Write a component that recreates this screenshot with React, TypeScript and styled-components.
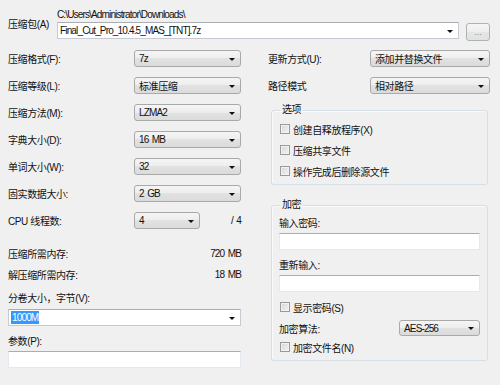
import styled, { createGlobalStyle } from "styled-components";

const GlobalStyle = createGlobalStyle`
  html, body {
    margin: 0;
    padding: 0;
    background: #f0f0f0;
  }
  body {
    font-family: "Liberation Sans", "Noto Sans CJK SC", sans-serif;
    font-size: 10px;
    letter-spacing: -0.4px;
    color: #111;
  }
`;

const Dialog = styled.div`
  box-sizing: border-box;
  width: 500px;
  height: 385px;
  padding: 7px 10px 0 8px;
  background: #f0f0f0;
  overflow: hidden;
`;

const TopRow = styled.div`
  display: grid;
  grid-template-columns: 49px 402px 31px;
  grid-template-rows: 14px 17px;
  row-gap: 1px;
`;

const ArchiveLabel = styled.span`
  grid-column: 1;
  grid-row: 1 / 3;
  align-self: center;
  white-space: nowrap;
`;

// latin strings in the shot are narrower than the CJK labels
const Latin = styled.span`
  letter-spacing: -0.85px;
  word-spacing: 1.5px;
  white-space: nowrap;
`;

const PathText = styled(Latin)`
  grid-column: 2;
  grid-row: 1;
  align-self: center;
`;

const BrowseButton = styled.div`
  grid-column: 3;
  grid-row: 2;
  justify-self: end;
  width: 24px;
  height: 18px;
  box-sizing: border-box;
  margin-top: 1px;
  border: 1px solid #adb2b5;
  border-radius: 3px;
  background: linear-gradient(#f6f6f6, #eeeeee 50%, #e6e6e6 50%, #e2e2e2);
  color: #8a8a8a;
  font-size: 9px;
  letter-spacing: 0;
  display: flex;
  align-items: center;
  justify-content: center;
`;

const Columns = styled.div`
  display: grid;
  grid-template-columns: 233px 222px;
  column-gap: 27px;
  margin-top: 11px;
`;

const Column = styled.div`
  display: flex;
  flex-direction: column;
`;

const Row = styled.div<{ $mt?: number; $mb?: number; $h?: number }>`
  display: flex;
  align-items: center;
  justify-content: space-between;
  height: ${(p) => p.$h ?? 17}px;
  margin-top: ${(p) => p.$mt ?? 0}px;
  margin-bottom: ${(p) => p.$mb ?? 10}px;
  white-space: nowrap;
`;

const RowLabel = styled.span<{ $w?: number }>`
  width: ${(p) => (p.$w ? `${p.$w}px` : "auto")};
  flex-shrink: 0;
`;

const InfoRow = styled.div<{ $mt: number }>`
  display: flex;
  align-items: center;
  justify-content: space-between;
  height: 14px;
  margin-top: ${(p) => p.$mt}px;
  white-space: nowrap;
`;

const FieldLabel = styled.div<{ $mt: number }>`
  height: 14px;
  line-height: 14px;
  margin-top: ${(p) => p.$mt}px;
  white-space: nowrap;
`;

const Combo = styled.div<{ $w?: number; $h?: number; $edit?: boolean; $mt?: number }>`
  display: flex;
  align-items: center;
  justify-content: space-between;
  box-sizing: border-box;
  width: ${(p) => (p.$w ? `${p.$w}px` : "100%")};
  height: ${(p) => p.$h ?? 17}px;
  margin-top: ${(p) => p.$mt ?? 0}px;
  padding: 0 5px 0 ${(p) => (p.$edit ? 2 : 4)}px;
  border: 1px solid ${(p) => (p.$edit ? "#c5cad3" : "#a9a9a9")};
  border-top-color: ${(p) => (p.$edit ? "#abadb3" : "#a9a9a9")};
  border-radius: ${(p) => (p.$edit ? "1px" : "3px")};
  background: ${(p) =>
    p.$edit
      ? "#fff"
      : "linear-gradient(#f5f5f5, #ededed 50%, #e2e2e2 50%, #dbdbdb)"};
  flex-shrink: 0;
  white-space: nowrap;
`;

const PathCombo = styled(Combo)`
  grid-column: 2;
  grid-row: 2;
`;

const ThreadCombo = styled(Combo)`
  margin-right: auto;
`;

const ComboText = styled.span<{ $latin?: boolean }>`
  letter-spacing: ${(p) => (p.$latin ? "-0.85px" : "-0.4px")};
  word-spacing: ${(p) => (p.$latin ? "1.5px" : "0")};
`;

const Arrow = styled.span`
  width: 0;
  height: 0;
  border-left: 3px solid transparent;
  border-right: 3px solid transparent;
  border-top: 3px solid #111;
  margin-top: 1px;
`;

const Selected = styled(Latin)`
  background: #3399ff;
  color: #fff;
  padding: 0 1px;
  line-height: 13px;
`;

const TextBox = styled.div<{ $mt: number }>`
  box-sizing: border-box;
  height: 17px;
  margin-top: ${(p) => p.$mt}px;
  background: #fff;
  border: 1px solid #e3e9ef;
  border-top-color: #abadb3;
`;

const Group = styled.fieldset<{ $mt: number }>`
  margin: ${(p) => p.$mt}px 2px 0 3px;
  padding: 0 7px 6px 7px;
  border: 1px solid #d5dfe5;
  border-radius: 3px;
  box-shadow: inset 1px 1px 0 #fafafa;
  min-width: 0;
  display: flex;
  flex-direction: column;
`;

const GroupTitle = styled.legend`
  padding: 0 2px;
  margin-left: 1px;
  line-height: 14px;
  color: #111;
`;

const CheckRow = styled.label<{ $mt: number }>`
  display: flex;
  align-items: center;
  gap: 3px;
  height: 14px;
  margin-top: ${(p) => p.$mt}px;
  white-space: nowrap;
`;

const CheckBox = styled.span`
  box-sizing: border-box;
  width: 10px;
  height: 10px;
  margin-left: 1px;
  border: 1px solid #9a9a9a;
  background: linear-gradient(135deg, #d6d6d6, #f4f4f4);
  box-shadow: inset 0 0 0 1px #f2f2f2;
`;

const options = ["创建自释放程序(X)", "压缩共享文件", "操作完成后删除源文件"];

const leftRows = [
  { label: "压缩格式(F):", value: "7z", latin: true },
  { label: "压缩等级(L):", value: "标准压缩", latin: false },
  { label: "压缩方法(M):", value: "LZMA2", latin: true },
  { label: "字典大小(D):", value: "16 MB", latin: true },
  { label: "单词大小(W):", value: "32", latin: true },
  { label: "固实数据大小:", value: "2 GB", latin: true },
];

function App() {
  return (
    <>
      <GlobalStyle />
      <Dialog>
        <TopRow>
          <ArchiveLabel>压缩包(A)</ArchiveLabel>
          <PathText>C:\Users\Administrator\Downloads\</PathText>
          <PathCombo $edit>
            <ComboText $latin>Final_Cut_Pro_10.4.5_MAS_[TNT].7z</ComboText>
            <Arrow />
          </PathCombo>
          <BrowseButton>...</BrowseButton>
        </TopRow>

        <Columns>
          <Column>
            {leftRows.map((r) => (
              <Row key={r.label}>
                <RowLabel>{r.label}</RowLabel>
                <Combo $w={107}>
                  <ComboText $latin={r.latin}>{r.value}</ComboText>
                  <Arrow />
                </Combo>
              </Row>
            ))}
            <Row>
              <RowLabel $w={126}>CPU 线程数:</RowLabel>
              <ThreadCombo $w={66}>
                <ComboText $latin>4</ComboText>
                <Arrow />
              </ThreadCombo>
              <Latin>/ 4</Latin>
            </Row>
            <InfoRow $mt={7}>
              <span>压缩所需内存:</span>
              <Latin>720 MB</Latin>
            </InfoRow>
            <InfoRow $mt={7}>
              <span>解压缩所需内存:</span>
              <Latin>18 MB</Latin>
            </InfoRow>
            <FieldLabel $mt={11}>分卷大小，字节(V):</FieldLabel>
            <Combo $edit $mt={3}>
              <Selected>1000M</Selected>
              <Arrow />
            </Combo>
            <FieldLabel $mt={9}>参数(P):</FieldLabel>
            <TextBox $mt={2} />
          </Column>

          <Column>
            <Row>
              <RowLabel>更新方式(U):</RowLabel>
              <Combo $w={120}>
                <ComboText>添加并替换文件</ComboText>
                <Arrow />
              </Combo>
            </Row>
            <Row $mb={0}>
              <RowLabel>路径模式</RowLabel>
              <Combo $w={120}>
                <ComboText>相对路径</ComboText>
                <Arrow />
              </Combo>
            </Row>

            <Group $mt={9}>
              <GroupTitle>选项</GroupTitle>
              {options.map((o, i) => (
                <CheckRow key={o} $mt={i === 0 ? 5 : 7}>
                  <CheckBox />
                  <span>{o}</span>
                </CheckRow>
              ))}
            </Group>

            <Group $mt={13}>
              <GroupTitle>加密</GroupTitle>
              <FieldLabel $mt={5}>输入密码:</FieldLabel>
              <TextBox $mt={2} />
              <FieldLabel $mt={9}>重新输入:</FieldLabel>
              <TextBox $mt={2} />
              <CheckRow $mt={8}>
                <CheckBox />
                <span>显示密码(S)</span>
              </CheckRow>
              <Row $mt={6} $mb={0} $h={16}>
                <RowLabel>加密算法:</RowLabel>
                <Combo $w={81} $h={16}>
                  <ComboText $latin>AES-256</ComboText>
                  <Arrow />
                </Combo>
              </Row>
              <CheckRow $mt={4}>
                <CheckBox />
                <span>加密文件名(N)</span>
              </CheckRow>
            </Group>
          </Column>
        </Columns>
      </Dialog>
    </>
  );
}

export default App;
